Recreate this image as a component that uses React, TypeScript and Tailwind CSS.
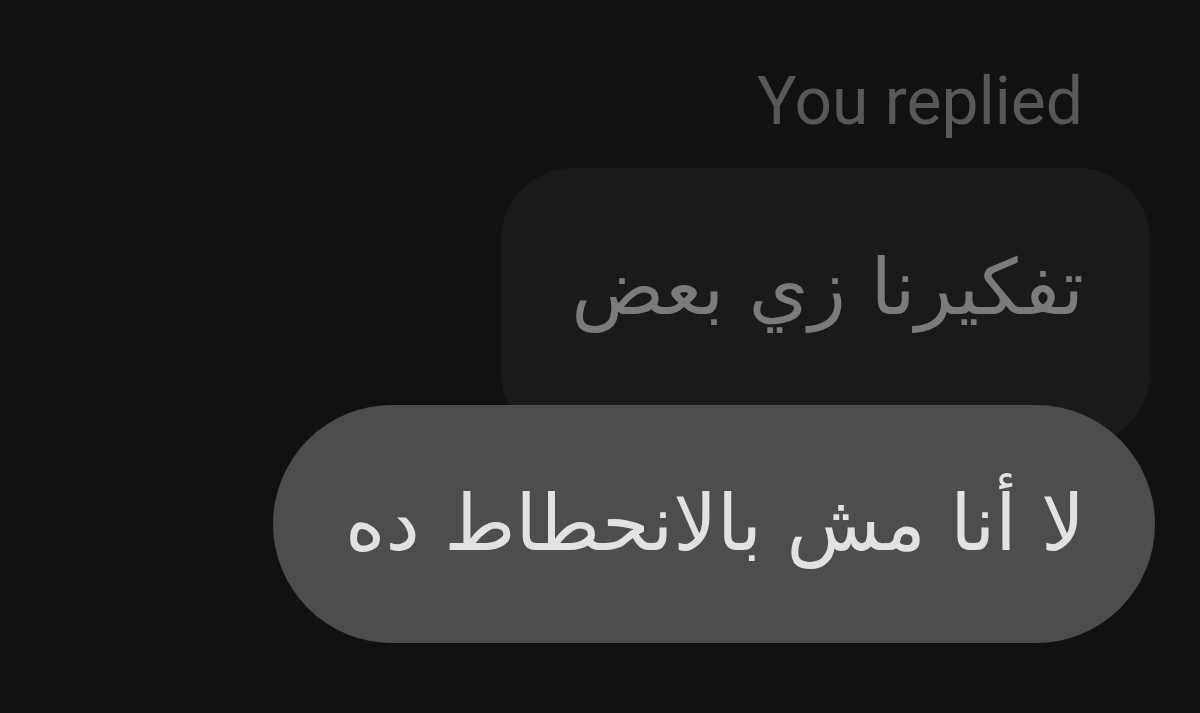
import React from "react";

const arabic = { fontFamily: '"DejaVu Sans", "Noto Sans", sans-serif' };

const App: React.FC = () => {
  return (
    <div className="h-[713px] w-[1200px] overflow-hidden bg-[#111111] flex flex-col items-end pr-[45px] pt-[62px]">
      <div
        className="pr-[72px] text-[66px] leading-[80px] text-[#585858]"
        style={{ fontFamily: 'Roboto, "Liberation Sans", sans-serif' }}
      >
        You replied
      </div>
      <div className="mt-[26px] mr-[5px] -mb-[40px] rounded-[72px] bg-[#1a1a1a] pl-[70px] pr-[66px] pt-[70px] pb-[107px]">
        <div dir="rtl" className="text-[77px] leading-[100px] text-[#7b7b7b]" style={arabic}>
          تفكيرنا زي بعض
        </div>
      </div>
      <div className="relative flex h-[238px] items-center rounded-full bg-[#4d4d4d] pl-[72px] pr-[70px]">
        <div dir="rtl" className="text-[77px] leading-[100px] text-[#e2e2e2]" style={arabic}>
          لا أنا مش بالانحطاط ده
        </div>
      </div>
    </div>
  );
};

export default App;
